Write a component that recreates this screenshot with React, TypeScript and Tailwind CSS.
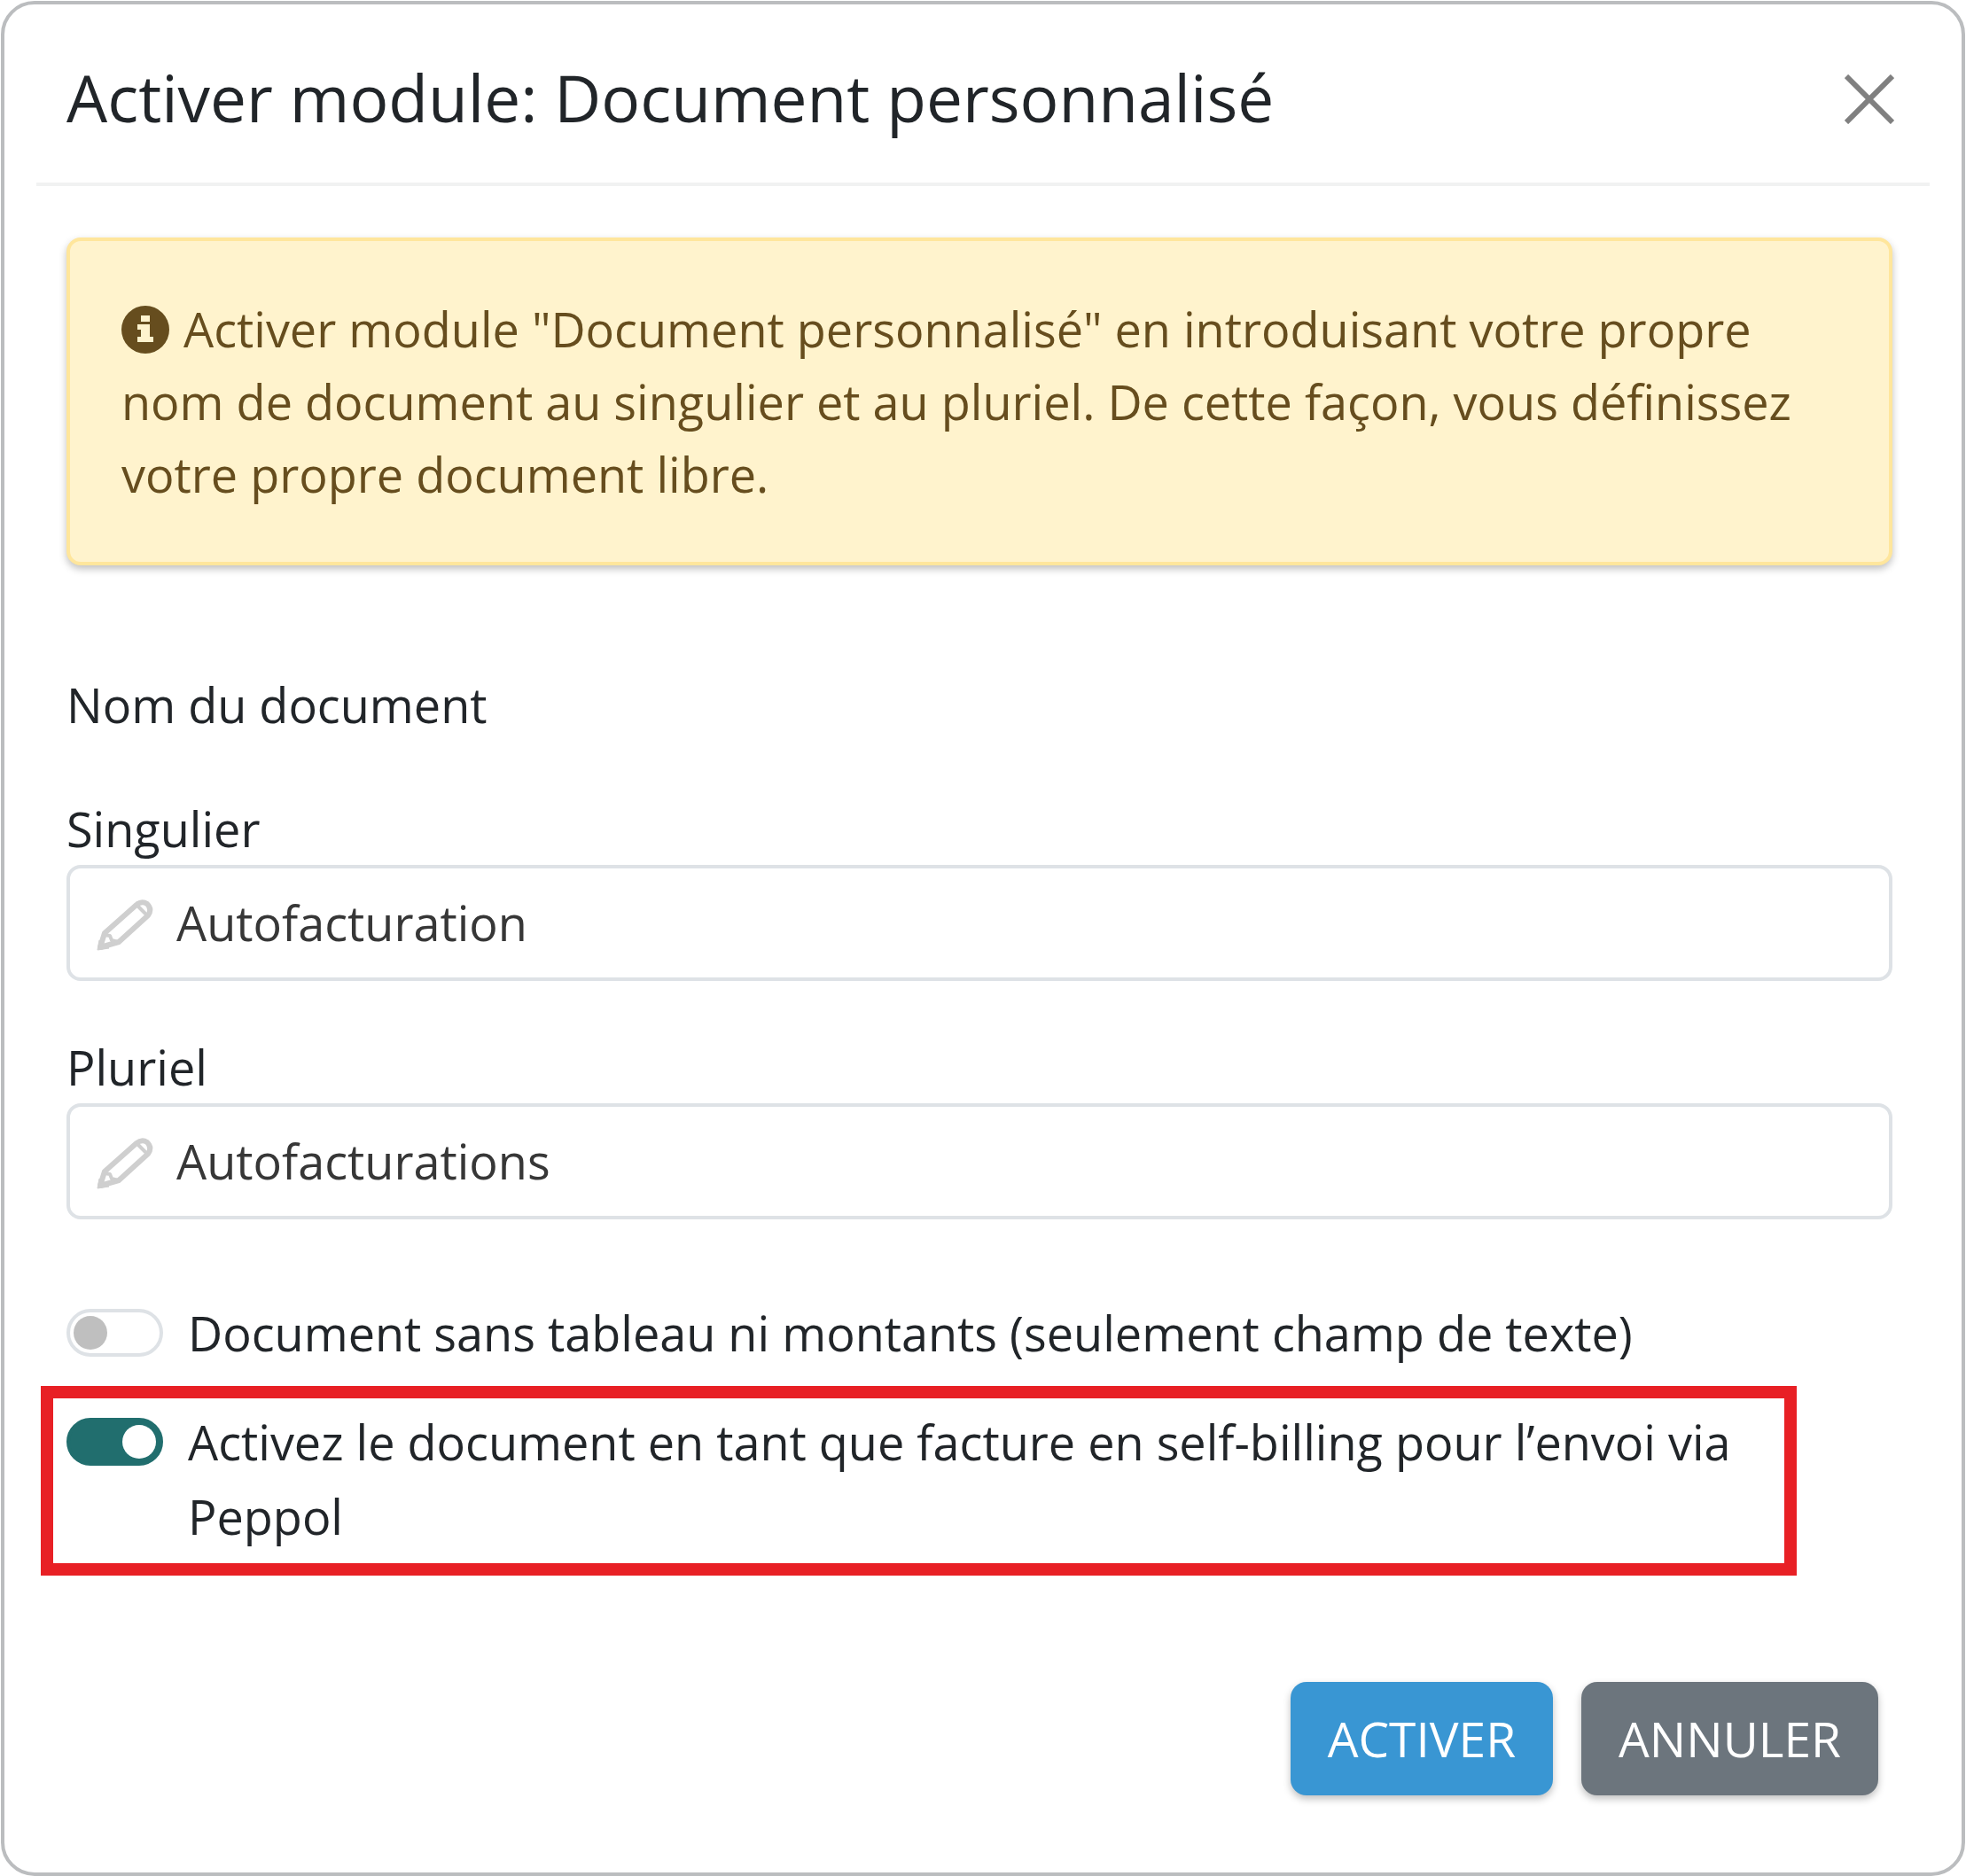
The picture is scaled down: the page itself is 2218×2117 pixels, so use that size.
import React, { useState } from 'react';

interface TextFieldProps {
  id: string;
  label: string;
  value: string;
  onChange: (value: string) => void;
}

interface ToggleProps {
  id: string;
  label: string;
  checked: boolean;
  onChange: (checked: boolean) => void;
}

function PencilIcon() {
  return (
    <svg
      className="mt-1 h-[58px] w-16 shrink-0 text-[#cfcfcf]"
      viewBox="0 0 64 58"
      fill="none"
      stroke="currentColor"
      strokeWidth="6"
      strokeLinejoin="round"
      aria-hidden="true"
    >
      <path d="M4 54L9 38L45 6Q51 1 57 5Q63 11 58 18L25 48Z" />
      <path d="M9 40L15 41L17 46L24 48" strokeWidth="4" />
      <path d="M45 6L57 18" strokeWidth="4" />
      <path d="M1 57L3 46L14 55Z" fill="currentColor" strokeWidth="1" />
    </svg>
  );
}

function InfoIcon() {
  return (
    <svg className="mr-4 inline size-[54px] align-[-7px]" viewBox="0 0 54 54" aria-hidden="true">
      <circle cx="27" cy="27" r="27" fill="currentColor" />
      <path d="M22 11h10v7H22zM18 21h14v14h4v6H18v-6h4v-8h-4z" fill="#fff3cd" />
    </svg>
  );
}

function TextField({ id, label, value, onChange }: TextFieldProps) {
  return (
    <div className="flex flex-col">
      <label htmlFor={id} className="leading-[82px]">
        {label}
      </label>
      <div className="flex h-[131px] items-center gap-[26px] rounded-2xl border-4 border-[#dee2e6] pr-8 pl-[30px]">
        <PencilIcon />
        <input
          id={id}
          type="text"
          value={value}
          onChange={(e) => onChange(e.target.value)}
          className="min-w-0 flex-1 bg-transparent text-[#373737] outline-none"
        />
      </div>
    </div>
  );
}

function Toggle({ id, label, checked, onChange }: ToggleProps) {
  return (
    <div className="flex items-start gap-7">
      <input
        id={id}
        type="checkbox"
        role="switch"
        checked={checked}
        onChange={(e) => onChange(e.target.checked)}
        className="mt-[15px] flex h-[54px] w-[109px] shrink-0 appearance-none items-center rounded-full border-4 border-[#dee2e6] px-1 before:size-[38px] before:rounded-full before:bg-[#bfbfbf] checked:justify-end checked:border-[#216e6e] checked:bg-[#216e6e] checked:before:bg-white"
      />
      <label htmlFor={id} className="leading-[84px]">
        {label}
      </label>
    </div>
  );
}

export default function App() {
  const [singular, setSingular] = useState('Autofacturation');
  const [plural, setPlural] = useState('Autofacturations');
  const [textOnly, setTextOnly] = useState(false);
  const [selfBilling, setSelfBilling] = useState(true);

  return (
    <div className="min-h-screen bg-white px-px pt-px font-['Open_Sans',sans-serif] text-[54px] text-[#212529]">
      <section
        role="dialog"
        aria-labelledby="dialog-title"
        className="flex min-h-[2116px] flex-col rounded-[38px] border-4 border-[#bbbdbf] px-9"
      >
        <header className="flex items-center justify-between border-b-4 border-[#f1f2f2] pt-[55px] pr-10 pb-[46px] pl-[34px]">
          <h1 id="dialog-title" className="text-[73px] leading-[100px]">
            Activer module: Document personnalisé
          </h1>
          <button type="button" aria-label="Fermer" className="pt-1 text-[#808080]">
            <svg className="size-14" viewBox="0 0 56 56" fill="none" stroke="currentColor" strokeWidth="6">
              <path d="M2 2L54 54M54 2L2 54" />
            </svg>
          </button>
        </header>

        <div className="flex flex-col pt-[58px] pr-[42px] pl-[34px]">
          <p className="rounded-2xl border-4 border-[#ffe69c] bg-[#fff3cd] p-[58px] leading-[82px] text-[#664d1e] shadow-[0_4px_8px_rgba(0,0,0,0.25)]">
            <InfoIcon />
            Activer module "Document personnalisé" en introduisant votre propre nom de document au singulier et au
            pluriel. De cette façon, vous définissez votre propre document libre.
          </p>

          <h2 className="mt-[116px] mb-[58px] leading-[82px]">Nom du document</h2>

          <div className="flex flex-col gap-14">
            <TextField id="singular" label="Singulier" value={singular} onChange={setSingular} />
            <TextField id="plural" label="Pluriel" value={plural} onChange={setPlural} />
          </div>

          <div className="mt-[86px] flex flex-col">
            <Toggle
              id="text-only"
              label="Document sans tableau ni montants (seulement champ de texte)"
              checked={textOnly}
              onChange={setTextOnly}
            />
            <div className="mt-[18px] mr-[108px] -ml-[29px] border-[14px] border-[#e82025] px-[15px] pt-[7px] pb-[11px]">
              <Toggle
                id="self-billing"
                label="Activez le document en tant que facture en self-billing pour l’envoi via Peppol"
                checked={selfBilling}
                onChange={setSelfBilling}
              />
            </div>
          </div>
        </div>

        <footer className="mt-[120px] flex justify-end gap-8 pr-[58px] text-[55px]">
          <button
            type="button"
            className="h-32 rounded-[18px] bg-[#3996d3] px-[42px] font-medium text-white shadow-[0_4px_8px_rgba(0,0,0,0.25)]"
          >
            ACTIVER
          </button>
          <button
            type="button"
            className="h-32 rounded-[18px] bg-[#6c757d] px-[42px] font-medium text-white shadow-[0_4px_8px_rgba(0,0,0,0.25)]"
          >
            ANNULER
          </button>
        </footer>
      </section>
    </div>
  );
}
